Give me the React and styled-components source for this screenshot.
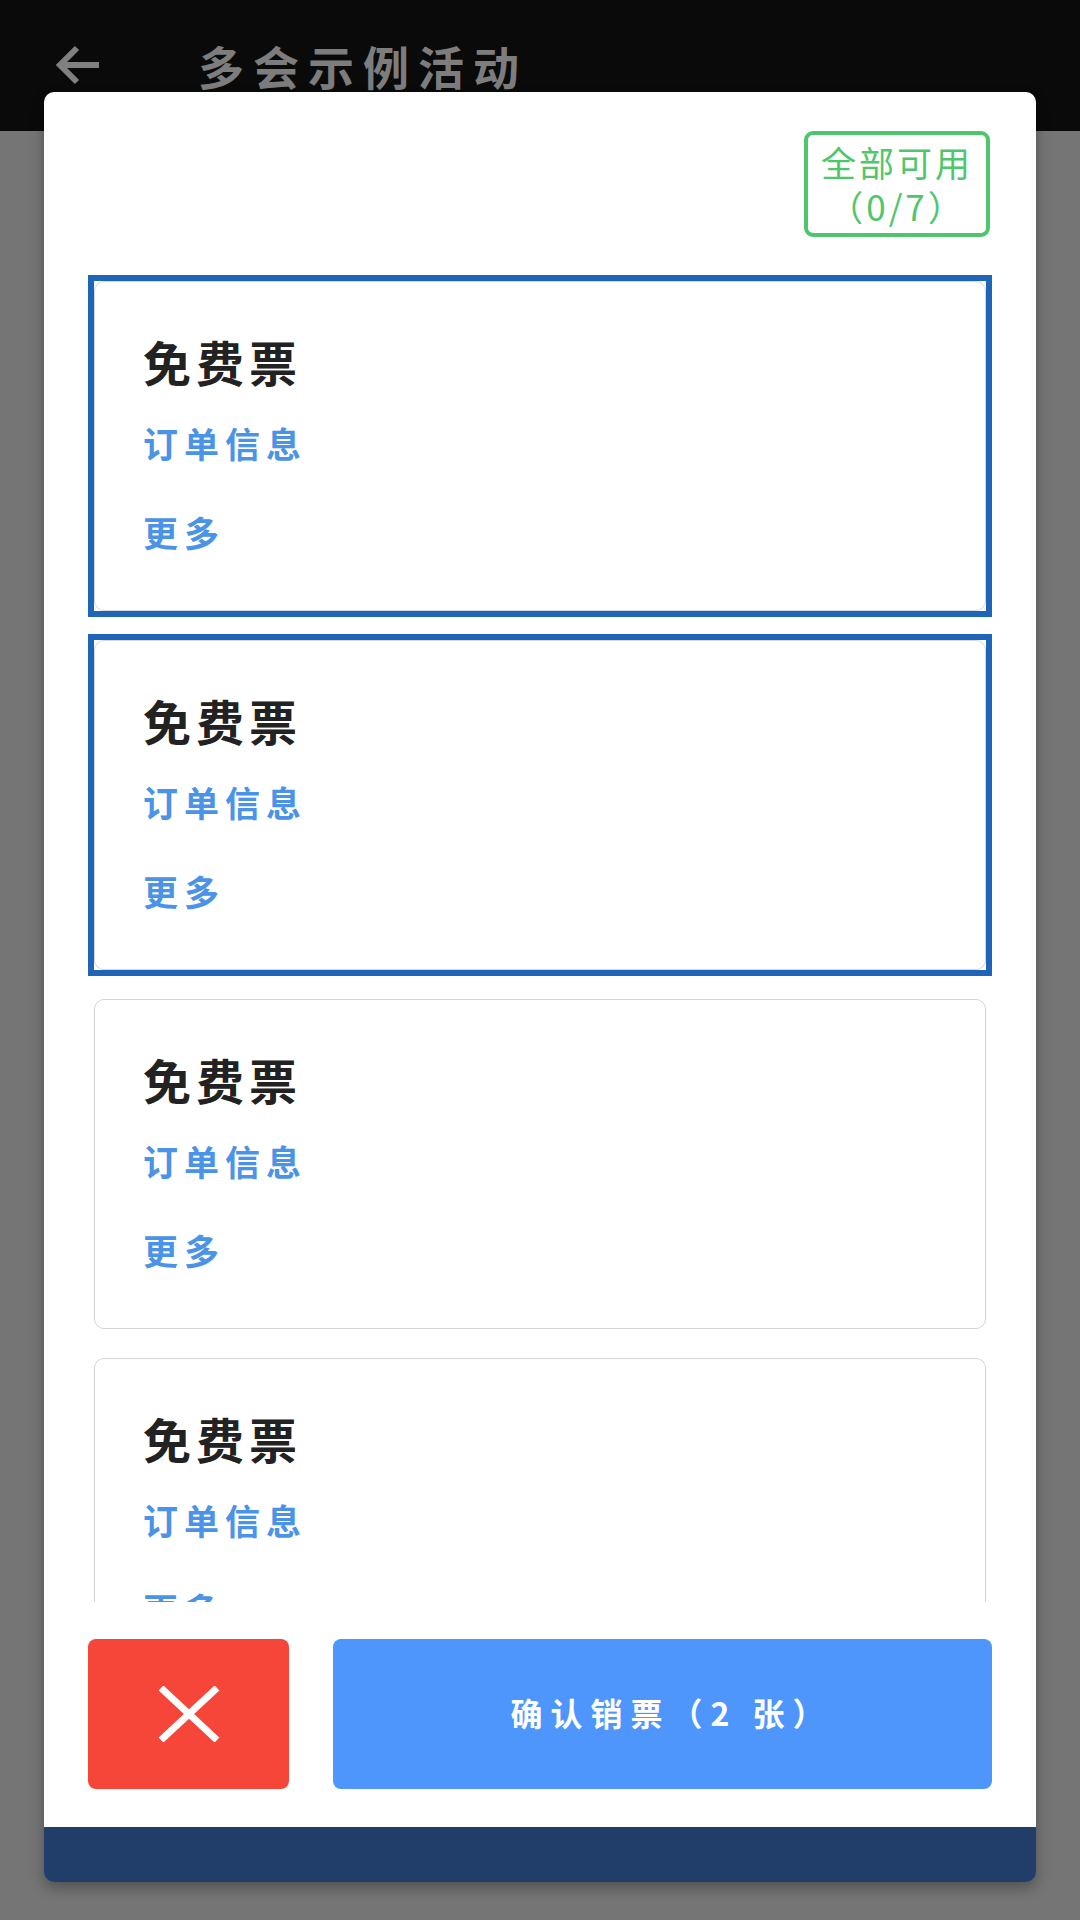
import React from "react";
import styled, { createGlobalStyle } from "styled-components";

const Global = createGlobalStyle`
  html, body { margin: 0; padding: 0; }
  body {
    width: 1080px;
    height: 1920px;
    overflow: hidden;
    background: #757575;
    font-family: "Noto Sans CJK SC", "Noto Sans", sans-serif;
  }
`;

const Page = styled.div`
  position: relative;
  width: 1080px;
  height: 1920px;
  background: #757575;
`;

const TopBar = styled.div`
  height: 131px;
  background: #0a0a0a;
  display: flex;
  align-items: center;
  padding-left: 55px;
  box-sizing: border-box;
`;

const BackIcon = styled.svg`
  width: 46px;
  height: 40px;
  margin-top: -2px;
`;

const Title = styled.div`
  margin-left: 97px;
  font-size: 46px;
  font-weight: 700;
  letter-spacing: 9px;
  color: #7d7d7d;
  line-height: 46px;
  margin-top: -2px;
`;

const Dialog = styled.div`
  position: absolute;
  left: 44px;
  top: 92px;
  width: 992px;
  border-radius: 10px;
  overflow: hidden;
  box-shadow: 0 6px 14px rgba(0, 0, 0, 0.3);
  display: flex;
  flex-direction: column;
`;

const Sheet = styled.div`
  background: #ffffff;
  padding: 39px 44px 38px 44px;
  display: flex;
  flex-direction: column;
`;

const BadgeRow = styled.div`
  display: flex;
  justify-content: flex-end;
  padding-right: 2px;
`;

const Badge = styled.div`
  width: 186px;
  height: 106px;
  box-sizing: border-box;
  border: 4px solid #4fc66b;
  border-radius: 9px;
  color: #4fc66b;
  font-size: 35px;
  line-height: 44px;
  letter-spacing: 3px;
  text-align: center;
  display: flex;
  flex-direction: column;
  justify-content: center;
`;

const List = styled.div`
  margin-top: 38px;
  height: 1327px;
  overflow: hidden;
  display: flex;
  flex-direction: column;
  gap: 17px;
`;

const Frame = styled.div`
  flex: none;
  border: 6px solid ${(p) => (p.$selected ? "#1e64b9" : "transparent")};
`;

const Card = styled.div`
  height: 330px;
  box-sizing: border-box;
  border: 1px solid #d6d6d6;
  border-radius: 10px;
  background: #fff;
  padding: 55px 48px 0 48px;
  display: flex;
  flex-direction: column;
`;

const CardTitle = styled.div`
  font-size: 48px;
  line-height: 48px;
  font-weight: 700;
  letter-spacing: 5px;
  color: #222222;
`;

const CardLink = styled.div`
  font-size: 35px;
  line-height: 34px;
  font-weight: 700;
  letter-spacing: 6px;
  color: #4b93e6;
  margin-top: ${(p) => p.$gap}px;
`;

const Actions = styled.div`
  margin-top: 37px;
  display: flex;
  gap: 44px;
  height: 150px;
`;

const CancelButton = styled.button`
  width: 201px;
  border: none;
  border-radius: 8px;
  background: #f54639;
  display: flex;
  align-items: center;
  justify-content: center;
  padding: 0;
`;

const ConfirmButton = styled.button`
  flex: 1;
  border: none;
  border-radius: 8px;
  background: #4e96fb;
  color: #ffffff;
  font-family: "Noto Sans CJK SC", "Noto Sans", sans-serif;
  font-size: 32px;
  font-weight: 700;
  letter-spacing: 8px;
  display: flex;
  align-items: center;
  justify-content: center;
  padding: 0 0 4px 18px;
`;

const Footer = styled.div`
  height: 55px;
  background: #213e6a;
`;

const cards = [true, true, false, false];

export default function App() {
  return (
    <Page>
      <Global />
      <TopBar>
        <BackIcon viewBox="0 0 46 40">
          <path
            d="M44 20 H5 M22 3 L5 20 L22 37"
            fill="none"
            stroke="#808080"
            strokeWidth="6"
          />
        </BackIcon>
        <Title>多会示例活动</Title>
      </TopBar>
      <Dialog>
        <Sheet>
          <BadgeRow>
            <Badge>
              <div>全部可用</div>
              <div>（0/7）</div>
            </Badge>
          </BadgeRow>
          <List>
            {cards.map((sel, i) => (
              <Frame key={i} $selected={sel}>
                <Card>
                  <CardTitle>免费票</CardTitle>
                  <CardLink $gap={41}>订单信息</CardLink>
                  <CardLink $gap={55}>更多</CardLink>
                </Card>
              </Frame>
            ))}
          </List>
          <Actions>
            <CancelButton aria-label="取消">
              <svg width="64" height="56" viewBox="0 0 64 56">
                <path
                  d="M4 2 L60 54 M60 2 L4 54"
                  stroke="#ffffff"
                  strokeWidth="7"
                  fill="none"
                />
              </svg>
            </CancelButton>
            <ConfirmButton>确认销票（2 张）</ConfirmButton>
          </Actions>
        </Sheet>
        <Footer />
      </Dialog>
    </Page>
  );
}
